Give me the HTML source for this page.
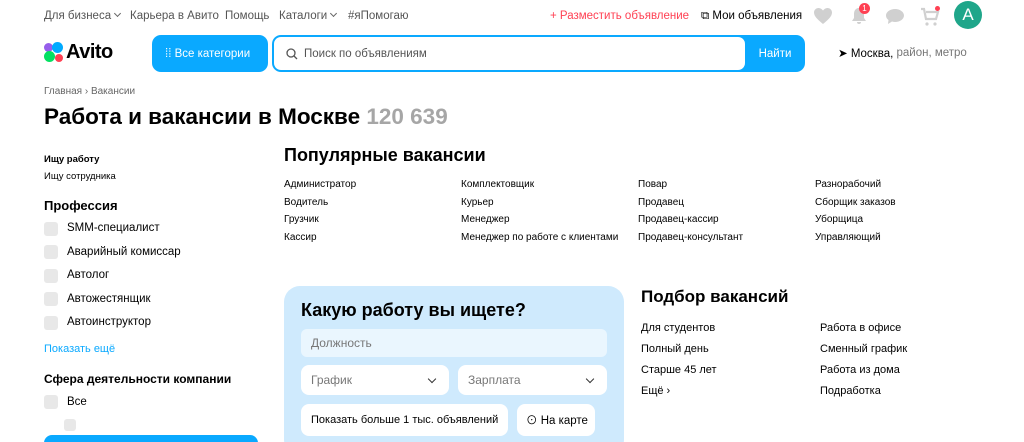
<!DOCTYPE html>
<html><head><meta charset="utf-8"><style>
*{margin:0;padding:0;box-sizing:border-box}
html,body{width:1024px;height:442px;overflow:hidden}
body{background:#fff;font-family:"Liberation Sans","Noto Sans CJK SC",sans-serif;color:#000;position:relative}
.a{position:absolute;white-space:nowrap}
.top{font-size:11.5px;color:#555;top:9px;line-height:14px}
.cb{position:absolute;left:44px;width:14px;height:14px;border-radius:3px;background:#e8e8e8}
.it{font-size:11.5px;line-height:14px}
.pv{font-size:10px}
.fx{display:flex;align-items:center}
.ch{display:inline-block;width:5px;height:5px;border-right:1.2px solid #666;border-bottom:1.2px solid #666;transform:rotate(45deg);margin:0 0 3px 4px}
.chd{position:absolute;right:14px;top:11px;width:6px;height:6px;border-right:1.5px solid #333;border-bottom:1.5px solid #333;transform:rotate(45deg)}
</style></head><body>
<div class="a top" style="left:44px">Для бизнеса<span class="ch"></span></div>
<div class="a top" style="left:130px">Карьера в Авито</div>
<div class="a top" style="left:225px">Помощь</div>
<div class="a top" style="left:279px">Каталоги<span class="ch"></span></div>
<div class="a top" style="left:348px">#яПомогаю</div>
<div class="a top" style="left:550px;color:#ff4053">+ Разместить объявление</div>
<div class="a top" style="left:701px;color:#000">⧉ Мои объявления</div>
<svg class="a" style="left:813px;top:7px" width="20" height="18" viewBox="0 0 20 18"><path d="M10 17C4 12 1 9 1 5.5 1 3 3 1 5.5 1 7.5 1 9 2.3 10 3.5 11 2.3 12.5 1 14.5 1 17 1 19 3 19 5.5 19 9 16 12 10 17Z" fill="#d0d0d0"/></svg>
<svg class="a" style="left:850px;top:6px" width="18" height="20" viewBox="0 0 18 20"><path d="M9 2C5.5 2 4 5 4 8v4l-2 3h14l-2-3V8c0-3-1.5-6-5-6ZM7 16a2 2 0 004 0Z" fill="#d0d0d0"/></svg>
<div class="a" style="left:859px;top:3px;width:11px;height:11px;border-radius:50%;background:#ff4053;color:#fff;font-size:8px;text-align:center;line-height:11px">1</div>
<svg class="a" style="left:885px;top:8px" width="20" height="17" viewBox="0 0 20 17"><path d="M10 1C5 1 1 4 1 7.5c0 2 1 3.5 2.5 4.5L3 16l4-2.5c1 .3 2 .5 3 .5 5 0 9-3 9-6.5S15 1 10 1Z" fill="#d0d0d0"/></svg>
<svg class="a" style="left:920px;top:7px" width="20" height="20" viewBox="0 0 20 20"><path d="M1 2h3l2 10h10l2-7H6" fill="none" stroke="#d0d0d0" stroke-width="2.2"/><circle cx="7" cy="17" r="1.6" fill="#d0d0d0"/><circle cx="15" cy="17" r="1.6" fill="#d0d0d0"/></svg>
<div class="a" style="left:935px;top:6px;width:5px;height:5px;border-radius:50%;background:#ff4053"></div>
<div class="a" style="left:954px;top:1px;width:28px;height:28px;border-radius:50%;background:#1fa68a;color:#fff;font-size:17px;text-align:center;line-height:28px">A</div>

<div class="a" style="left:44px;top:43px;width:9px;height:9px;border-radius:50%;background:#965eeb"></div>
<div class="a" style="left:52px;top:42px;width:11px;height:11px;border-radius:50%;background:#0af"></div>
<div class="a" style="left:44px;top:51px;width:11px;height:11px;border-radius:50%;background:#04e061"></div>
<div class="a" style="left:55px;top:54px;width:8px;height:8px;border-radius:50%;background:#ff4053"></div>
<div class="a" style="left:66px;top:41px;font-size:20px;font-weight:bold;letter-spacing:-0.5px;line-height:23px">Avito</div>
<div class="a fx" style="left:152px;top:35px;width:116px;height:37px;border-radius:9px;background:#0aa9ff;color:#fff;font-size:11.5px;padding-left:13px">⁞⁞ Все категории</div>
<div class="a" style="left:272px;top:35px;width:533px;height:37px;border-radius:9px;background:#0aa9ff"></div>
<div class="a fx" style="left:274px;top:37px;width:471px;height:33px;border-radius:7px;background:#fff;font-size:11.5px;color:#555;padding-left:12px">
<svg width="12" height="12" viewBox="0 0 12 12" style="margin-right:6px"><circle cx="5" cy="5" r="4" fill="none" stroke="#555" stroke-width="1.3"/><path d="M8 8l3 3" stroke="#555" stroke-width="1.3"/></svg>Поиск по объявлениям</div>
<div class="a fx" style="left:745px;top:35px;width:60px;height:37px;justify-content:center;font-size:11.5px;color:#fff">Найти</div>
<div class="a fx" style="left:838px;top:45px;height:16px;font-size:11.5px">➤&nbsp;Москва,&nbsp;<span style="color:#777">район, метро</span></div>

<div class="a" style="left:44px;top:86px;font-size:10px;color:#666;line-height:12px">Главная › Вакансии</div>
<div class="a" style="left:44px;top:103px;font-size:22.5px;font-weight:bold;line-height:27px">Работа и вакансии в Москве <span style="color:#a6a6a6">120 639</span></div>

<div class="a" style="left:44px;top:154px;font-size:9.5px;font-weight:bold;line-height:11px">Ищу работу</div>
<div class="a" style="left:44px;top:171px;font-size:9.5px;line-height:11px">Ищу сотрудника</div>
<div class="a" style="left:44px;top:198px;font-size:13px;font-weight:bold;line-height:16px">Профессия</div>
<div class="cb" style="top:222px"></div><div class="a it" style="left:67px;top:221px">SMM-специалист</div>
<div class="cb" style="top:245px"></div><div class="a it" style="left:67px;top:245px">Аварийный комиссар</div>
<div class="cb" style="top:269px"></div><div class="a it" style="left:67px;top:268px">Автолог</div>
<div class="cb" style="top:292px"></div><div class="a it" style="left:67px;top:292px">Автожестянщик</div>
<div class="cb" style="top:316px"></div><div class="a it" style="left:67px;top:315px">Автоинструктор</div>
<div class="a" style="left:44px;top:342px;font-size:11px;color:#0aa9ff;line-height:14px">Показать ещё</div>
<div class="a" style="left:44px;top:372px;font-size:12px;font-weight:bold;line-height:15px">Сфера деятельности компании</div>
<div class="cb" style="top:395px"></div><div class="a it" style="left:67px;top:395px">Все</div>
<div class="cb" style="top:419px;left:64px;width:12px;height:12px"></div>
<div class="a" style="left:44px;top:435px;width:214px;height:20px;border-radius:8px;background:#0aa9ff"></div>

<div class="a" style="left:284px;top:144px;font-size:18px;font-weight:bold;line-height:22px">Популярные вакансии</div>
<div class="a pv" style="left:284px;top:176px;line-height:17.7px">Администратор<br>Водитель<br>Грузчик<br>Кассир</div>
<div class="a pv" style="left:461px;top:176px;line-height:17.7px">Комплектовщик<br>Курьер<br>Менеджер<br>Менеджер по работе с клиентами</div>
<div class="a pv" style="left:638px;top:176px;line-height:17.7px">Повар<br>Продавец<br>Продавец-кассир<br>Продавец-консультант</div>
<div class="a pv" style="left:815px;top:176px;line-height:17.7px">Разнорабочий<br>Сборщик заказов<br>Уборщица<br>Управляющий</div>

<div class="a" style="left:284px;top:286px;width:340px;height:170px;border-radius:16px;background:#cfeafd"></div>
<div class="a" style="left:301px;top:299px;font-size:18px;font-weight:bold;line-height:22px">Какую работу вы ищете?</div>
<div class="a fx" style="left:301px;top:329px;width:306px;height:28px;border-radius:6px;background:#eaf6fe;font-size:12px;color:#777;padding-left:10px">Должность</div>
<div class="a fx" style="left:301px;top:365px;width:148px;height:30px;border-radius:8px;background:#fff;font-size:12px;color:#777;padding-left:10px">График<span class="chd"></span></div>
<div class="a fx" style="left:458px;top:365px;width:149px;height:30px;border-radius:8px;background:#fff;font-size:12px;color:#777;padding-left:10px">Зарплата<span class="chd"></span></div>
<div class="a fx" style="left:301px;top:404px;width:207px;height:32px;border-radius:8px;background:#fff;font-size:11px;padding-left:10px">Показать больше 1 тыс. объявлений</div>
<div class="a fx" style="left:517px;top:404px;width:78px;height:32px;border-radius:8px;background:#fff;font-size:11.5px;padding-left:9px">⊙&nbsp;На карте</div>

<div class="a" style="left:641px;top:286px;font-size:17px;font-weight:bold;line-height:21px">Подбор вакансий</div>
<div class="a" style="left:641px;top:318px;font-size:11px;line-height:21px">Для студентов<br>Полный день<br>Старше 45 лет<br>Ещё ›</div>
<div class="a" style="left:820px;top:318px;font-size:11px;line-height:21px">Работа в офисе<br>Сменный график<br>Работа из дома<br>Подработка</div>
</body></html>
